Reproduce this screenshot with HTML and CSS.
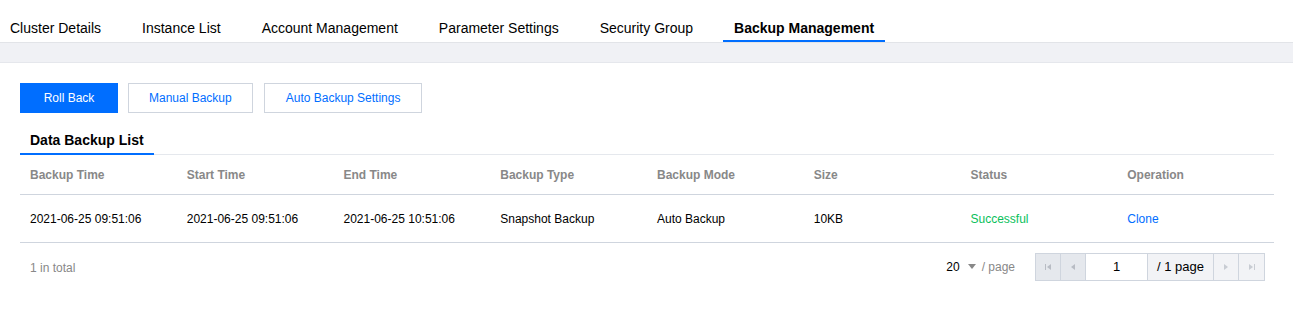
FILE: index.html
```html
<!DOCTYPE html>
<html lang="en">
<head>
    <meta charset="UTF-8">
    <meta name="viewport" content="width=device-width, initial-scale=1.0">
    <title>Backup Management</title>
    <link rel="stylesheet" href="styles.css">
</head>
<body>

    <!-- Top tabs -->
    <div class="tabs">
        <a class="tab">Cluster Details</a>
        <a class="tab">Instance List</a>
        <a class="tab">Account Management</a>
        <a class="tab">Parameter Settings</a>
        <a class="tab">Security Group</a>
        <a class="tab active">Backup Management</a>
    </div>
    <div class="band"></div>

    <div class="content">
        <div class="toolbar">
            <button class="btn primary">Roll Back</button>
            <button class="btn">Manual Backup</button>
            <button class="btn">Auto Backup Settings</button>
        </div>

        <div class="subtabs">
            <span class="subtab">Data Backup List</span>
        </div>

        <table class="grid">
            <thead>
                <tr>
                    <th>Backup Time</th>
                    <th>Start Time</th>
                    <th>End Time</th>
                    <th>Backup Type</th>
                    <th>Backup Mode</th>
                    <th>Size</th>
                    <th>Status</th>
                    <th>Operation</th>
                </tr>
            </thead>
            <tbody>
                <tr>
                    <td>2021-06-25 09:51:06</td>
                    <td>2021-06-25 09:51:06</td>
                    <td>2021-06-25 10:51:06</td>
                    <td>Snapshot Backup</td>
                    <td>Auto Backup</td>
                    <td>10KB</td>
                    <td class="ok">Successful</td>
                    <td><a class="link">Clone</a></td>
                </tr>
            </tbody>
        </table>

        <div class="footer">
            <span class="total">1 in total</span>
            <div class="pager">
                <span class="size">20 <span class="caret"></span></span>
                <span class="per">/ page</span>
                <div class="pages">
                    <span class="pbtn dark">
                        <svg width="8" height="8" viewBox="0 0 8 8"><rect x="1" y="1" width="1" height="6" fill="#b8bcc4"/><path d="M7 1 L3 4 L7 7 Z" fill="#b8bcc4"/></svg>
                    </span>
                    <span class="pbtn dark">
                        <svg width="8" height="8" viewBox="0 0 8 8"><path d="M6 1 L2 4 L6 7 Z" fill="#b8bcc4"/></svg>
                    </span>
                    <span class="pinput">1</span>
                    <span class="ptotal">/ 1 page</span>
                    <span class="pbtn">
                        <svg width="8" height="8" viewBox="0 0 8 8"><path d="M2 1 L6 4 L2 7 Z" fill="#c8ccd3"/></svg>
                    </span>
                    <span class="pbtn last">
                        <svg width="8" height="8" viewBox="0 0 8 8"><path d="M1 1 L5 4 L1 7 Z" fill="#c8ccd3"/><rect x="6" y="1" width="1" height="6" fill="#c8ccd3"/></svg>
                    </span>
                </div>
            </div>
        </div>
    </div>

</body>
</html>
```

FILE: styles.css
```css
/* Basic styles */
* {
    box-sizing: border-box;
}

body {
    font-family: "Liberation Sans", Arial, sans-serif;
    font-size: 12px;
    color: #000;
    background: #fff;
    margin: 0;
}

/* Top tabs */
.tabs {
    display: flex;
    gap: 19px;
    height: 43px;
    border-bottom: 1px solid #e2e4e8;
}

.tab {
    display: block;
    height: 42px;
    padding: 18px 11px 2px;
    font-size: 14px;
    line-height: 20px;
    color: #000;
    border-bottom: 2px solid transparent;
}

.tab:first-child {
    padding-left: 10px;
}

.tab.active {
    font-weight: bold;
    border-bottom-color: #006eff;
}

.band {
    height: 20px;
    background: #f0f1f5;
    border-bottom: 1px solid #e5e7ec;
}

/* Content */
.content {
    padding: 20px 19px 0 20px;
}

.toolbar {
    display: flex;
    gap: 10px;
}

.btn {
    height: 30px;
    padding: 0 20px;
    font-family: inherit;
    font-size: 12px;
    color: #006eff;
    background: #fff;
    border: 1px solid #cfd5de;
    cursor: pointer;
}

.btn.primary {
    min-width: 98px;
    color: #fff;
    background: #006eff;
    border-color: #006eff;
}

.btn:nth-child(3) {
    margin-left: 1px;
    padding: 0 21px;
}

.subtabs {
    margin-top: 17px;
    border-bottom: 1px solid #e5e8ed;
    height: 25px;
}

.subtab {
    display: inline-block;
    padding: 0 10px;
    height: 25px;
    font-size: 14px;
    font-weight: bold;
    line-height: 20px;
    border-bottom: 2px solid #006eff;
}

/* Table */
.grid {
    width: 100%;
    border-collapse: collapse;
    table-layout: fixed;
}

.grid th {
    text-align: left;
    font-weight: bold;
    color: #888;
    height: 39px;
    padding: 2px 10px 0;
    border-bottom: 1px solid #cfd5de;
}

.grid td {
    height: 48px;
    padding: 2px 10px 0;
    border-bottom: 1px solid #cfd5de;
}

.ok {
    color: #0abf5b;
}

.link {
    color: #006eff;
    cursor: pointer;
}

/* Footer */
.footer {
    display: flex;
    align-items: center;
    justify-content: space-between;
    padding: 10px 9px 0 10px;
}

.total {
    color: #888;
    padding-top: 2px;
}

.pager {
    display: flex;
    align-items: center;
}

.size {
    font-size: 12px;
    color: #000;
    display: flex;
    align-items: center;
}

.caret {
    display: inline-block;
    margin-left: 8px;
    border-left: 4px solid transparent;
    border-right: 4px solid transparent;
    border-top: 5px solid #888;
}

.per {
    color: #888;
    margin-left: 6px;
    margin-right: 20px;
}

.pages {
    display: flex;
    height: 28px;
    border: 1px solid #cfd5de;
}

.pbtn {
    width: 25px;
    display: flex;
    align-items: center;
    justify-content: center;
    background: #f2f3f6;
    border-right: 1px solid #cfd5de;
}

.pbtn.dark {
    background: #e5e8ed;
}

.pbtn.last {
    border-right: none;
}

.pinput {
    width: 62px;
    background: #fff;
    border-right: 1px solid #cfd5de;
    display: flex;
    align-items: center;
    justify-content: center;
    font-size: 13px;
}

.ptotal {
    width: 66px;
    background: #f2f3f6;
    border-right: 1px solid #cfd5de;
    display: flex;
    align-items: center;
    justify-content: center;
    font-size: 13px;
}
```
